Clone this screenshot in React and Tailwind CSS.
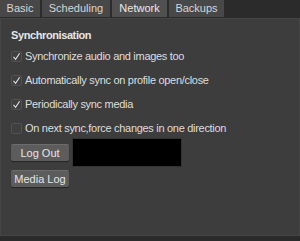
import React from 'react';

const tabs = [
  { name: 'Basic', w: 'w-[40px]' },
  { name: 'Scheduling', w: 'w-[68px]' },
  { name: 'Network', w: 'w-[55px]' },
  { name: 'Backups', w: 'w-[55px]' },
];

const CheckRow = ({ checked, label }) => (
  <div className="flex items-center h-[12px] gap-[3px]">
    <div className="w-[11px] h-[11px] rounded-[2px] bg-[#3f3f3f] border border-[#525252] flex items-center justify-center">
      {checked && (
        <svg width="9" height="9" viewBox="0 0 9 9">
          <path d="M1.5 4.8 L3.6 7.3 L7.6 1.2" fill="none" stroke="#e2e2e2" strokeWidth="1.1" />
        </svg>
      )}
    </div>
    <span className="tracking-[-0.3px]">{label}</span>
  </div>
);

const Button = ({ children }) => (
  <button className="w-[58px] h-[17px] rounded-[2px] bg-[#5c5c5c] border-t border-t-[#6c6c6c] shadow-[0_1px_1px_rgba(0,0,0,0.4)] text-[#e6e6e6] text-[11px] leading-none">
    {children}
  </button>
);

export default function App() {
  return (
    <div className="w-[300px] h-[241px] bg-[#2b2b2b] flex flex-col text-[11px] text-[#dedede]" style={{ fontFamily: '"Liberation Sans", Arial, sans-serif' }}>
      <div className="flex gap-[2px] h-[18px] shrink-0">
        {tabs.map((t) => (
          <div
            key={t.name}
            className={`${t.w} h-[17px] flex items-center justify-center ${t.name === 'Network' ? 'bg-[#505050] text-[#e8e8e8]' : 'bg-[#484848] text-[#d6d6d6]'}`}
          >
            {t.name}
          </div>
        ))}
      </div>
      <div className="h-[218px] bg-[#3d3d3d] border border-[#454545] pl-[10px] pt-[11px]">
        <div className="font-bold text-[#e6e6e6] leading-none tracking-[-0.4px]">Synchronisation</div>
        <div className="flex flex-col gap-[12px] mt-[9px]">
          <CheckRow checked label="Synchronize audio and images too" />
          <CheckRow checked label="Automatically sync on profile open/close" />
          <CheckRow checked label="Periodically sync media" />
          <CheckRow label="On next sync,force changes in one direction" />
        </div>
        <div className="flex items-start gap-[3px] mt-[4px]">
          <div className="mt-[6px]"><Button>Log Out</Button></div>
          <div className="w-[110px] h-[29px] bg-black border border-[#333]" />
        </div>
        <div className="mt-[3px]"><Button>Media Log</Button></div>
      </div>
    </div>
  );
}
